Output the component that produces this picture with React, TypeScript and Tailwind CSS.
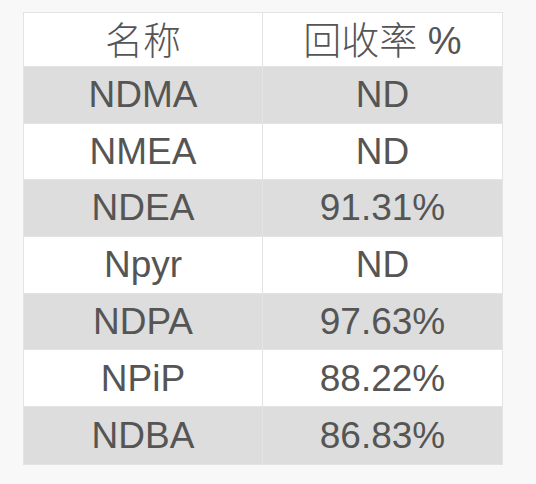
import React from "react";

const rows: [string, string][] = [
  ["NDMA", "ND"],
  ["NMEA", "ND"],
  ["NDEA", "91.31%"],
  ["Npyr", "ND"],
  ["NDPA", "97.63%"],
  ["NPiP", "88.22%"],
  ["NDBA", "86.83%"],
];

export default function App() {
  return (
    <div className="w-[536px] h-[484px] bg-[#f8f8f8] pt-[12px] pl-[23px]" style={{ fontFamily: '"Liberation Sans", Arial, sans-serif' }}>
      <div className="w-[480px] border border-[#e3e3e3] text-[#555555]">
        <div className="grid grid-cols-[239px_1fr] h-[54px] bg-white border-b border-[#e3e3e3]">
          <div className="flex items-center justify-center border-r border-[#e3e3e3] text-[38px] font-light" style={{ fontFamily: '"Liberation Sans", "Noto Sans CJK SC", sans-serif' }}>
            名称
          </div>
          <div className="flex items-center justify-center text-[38px] font-light" style={{ fontFamily: '"Liberation Sans", "Noto Sans CJK SC", sans-serif' }}>
            回收率 %
          </div>
        </div>
        {rows.map(([a, b], i) => (
          <div
            key={a}
            className={`grid grid-cols-[239px_1fr] h-[56.7px] text-[37px] ${i % 2 === 0 ? "bg-[#dcdddc]" : "bg-white"} ${i < rows.length - 1 ? "border-b border-[#e3e3e3]" : ""}`}
          >
            <div className="flex items-center justify-center border-r border-[#e3e3e3]">{a}</div>
            <div className="flex items-center justify-center">{b}</div>
          </div>
        ))}
      </div>
    </div>
  );
}
